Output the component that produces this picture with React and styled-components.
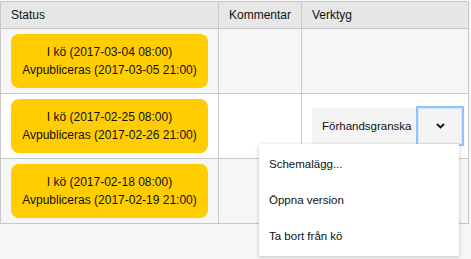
import React from "react";
import styled, { createGlobalStyle } from "styled-components";

const Global = createGlobalStyle`
  html, body { margin: 0; padding: 0; background: #f6f6f6; }
  body { font-family: "Liberation Sans", Arial, sans-serif; color: #111111; }
  #root { min-height: 259px; }
`;

const Page = styled.div`
  padding-top: 1px;
  width: 469px;
  min-height: 258px;
`;

const Table = styled.table`
  border-collapse: collapse;
  width: 469px;
  table-layout: fixed;
  font-size: 12px;
`;

const Col = styled.col`
  width: ${(p) => (p.$w ? `${p.$w}px` : "auto")};
`;

const HeadCell = styled.th`
  background: #e7e7e7;
  border: 1px solid #c8c8c8;
  height: 26px;
  padding: 0 10px;
  text-align: left;
  font-weight: normal;
  font-size: 12px;
  color: #111111;
`;

const Row = styled.tr`
  background: ${(p) => (p.$alt ? "#ffffff" : "#f6f6f6")};
`;

const Cell = styled.td`
  border: 1px solid #c8c8c8;
  padding: 5px 10px;
  height: 54px;
  vertical-align: middle;
`;

const Badge = styled.div`
  background: #ffcd00;
  border-radius: 8px;
  height: 54px;
  box-sizing: border-box;
  padding: 9px 0;
  text-align: center;
  line-height: 18px;
  font-size: 12px;
  color: #111111;
`;

const Group = styled.div`
  position: relative;
  display: flex;
  height: 36px;
  width: 150px;
`;

const Button = styled.div`
  display: flex;
  align-items: center;
  padding: 0 10px;
  width: 106px;
  box-sizing: border-box;
  background: #f4f4f4;
  font-size: 11.5px;
  color: #111111;
`;

const Toggle = styled.div`
  width: 44px;
  display: flex;
  align-items: center;
  justify-content: center;
  background: #f4f4f4;
  outline: 2px solid #92c3fb;
  box-shadow: inset 0 0 0 1px #d4e8ff;
`;

const Menu = styled.div`
  position: absolute;
  top: 36px;
  right: 3px;
  width: 200px;
  padding: 2px 0;
  background: #ffffff;
  box-shadow: 0 1px 4px rgba(0, 0, 0, 0.22);
  z-index: 2;
`;

const MenuItem = styled.div`
  height: 36px;
  display: flex;
  align-items: center;
  padding: 0 10px;
  font-size: 11.5px;
  color: #111111;
`;

const rows = [
  ["I kö (2017-03-04 08:00)", "Avpubliceras (2017-03-05 21:00)"],
  ["I kö (2017-02-25 08:00)", "Avpubliceras (2017-02-26 21:00)"],
  ["I kö (2017-02-18 08:00)", "Avpubliceras (2017-02-19 21:00)"],
];

const Chevron = () => (
  <svg width="9" height="6" viewBox="0 0 9 6">
    <polyline points="1,1 4.5,4.5 8,1" fill="none" stroke="#111" strokeWidth="1.8" />
  </svg>
);

export default function App() {
  return (
    <Page>
      <Global />
      <Table>
        <colgroup>
          <Col $w={218} />
          <Col $w={83} />
          <Col />
        </colgroup>
        <thead>
          <tr>
            <HeadCell>Status</HeadCell>
            <HeadCell>Kommentar</HeadCell>
            <HeadCell>Verktyg</HeadCell>
          </tr>
        </thead>
        <tbody>
          {rows.map((r, i) => (
            <Row key={i} $alt={i === 1}>
              <Cell>
                <Badge>
                  {r[0]}
                  <br />
                  {r[1]}
                </Badge>
              </Cell>
              <Cell />
              <Cell>
                {i === 1 && (
                  <Group>
                    <Button>Förhandsgranska</Button>
                    <Toggle>
                      <Chevron />
                    </Toggle>
                    <Menu>
                      <MenuItem>Schemalägg...</MenuItem>
                      <MenuItem>Öppna version</MenuItem>
                      <MenuItem>Ta bort från kö</MenuItem>
                    </Menu>
                  </Group>
                )}
              </Cell>
            </Row>
          ))}
        </tbody>
      </Table>
    </Page>
  );
}
